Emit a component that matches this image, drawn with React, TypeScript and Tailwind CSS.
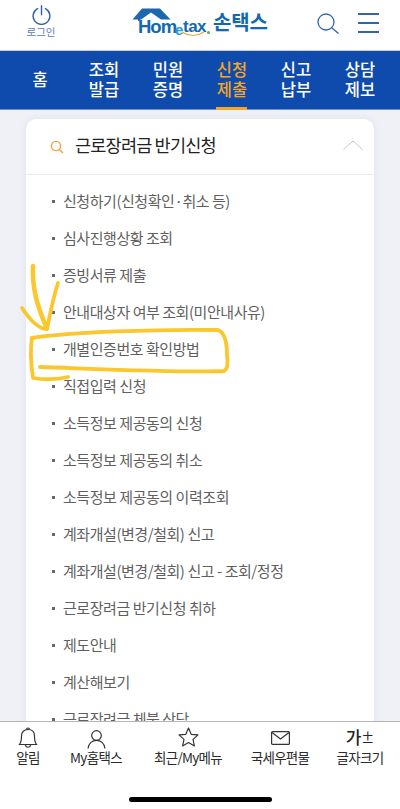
import React from "react";

const font = { fontFamily: '"Noto Sans CJK KR", sans-serif' };
const latin = { fontFamily: '"Liberation Sans", sans-serif' };

const navItems = [
  { a: "홈", b: "" },
  { a: "조회", b: "발급" },
  { a: "민원", b: "증명" },
  { a: "신청", b: "제출", active: true },
  { a: "신고", b: "납부" },
  { a: "상담", b: "제보" },
];

const items = [
  "신청하기(신청확인·취소 등)",
  "심사진행상황 조회",
  "증빙서류 제출",
  "안내대상자 여부 조회(미안내사유)",
  "개별인증번호 확인방법",
  "직접입력 신청",
  "소득정보 제공동의 신청",
  "소득정보 제공동의 취소",
  "소득정보 제공동의 이력조회",
  "계좌개설(변경/철회) 신고",
  "계좌개설(변경/철회) 신고 - 조회/정정",
  "근로장려금 반기신청 취하",
  "제도안내",
  "계산해보기",
  "근로장려금 체불 상담",
];

function Tab({ label, icon, w }: { label: string; icon: React.ReactNode; w: string }) {
  return (
    <div className={`flex flex-col items-center ${w}`}>
      <div className="h-[27px] flex items-end justify-center">{icon}</div>
      <div className="text-[13.5px] leading-[18px] -mt-[1px] tracking-[-0.7px] text-[#2b2b2b] whitespace-nowrap">{label}</div>
    </div>
  );
}

export default function App() {
  return (
    <div className="relative w-[400px] h-[809px] overflow-hidden flex flex-col bg-[#eff1f7]" style={font}>
      {/* Header */}
      <header className="h-[51px] shrink-0 bg-white border-b border-[#c9ccd2] flex pl-[25px] pr-[20px]">
        <div className="w-[32px] flex flex-col items-center pt-[5px]">
          <svg width="19" height="20" viewBox="0 0 19 20" fill="none" stroke="#2f5fb0" strokeWidth="1.4" strokeLinecap="round">
            <path d="M5.5 3.6a8.4 8.4 0 1 0 8 0" />
            <path d="M9.5 0.8v9" />
          </svg>
          <div className="text-[10.5px] leading-[14px] text-[#5a7cb8] whitespace-nowrap">로그인</div>
        </div>
        <div className="ml-[75px] relative w-[138px] h-[40px] shrink-0">
          <svg width="40" height="30" viewBox="0 0 40 30" className="absolute left-[0px] top-[7px]">
            <path d="M0.5 12.5 L10 1.5 H28 L38.5 12.5 H29 L19 5.5 L9 12.5 Z" fill="#1c67ad" />
            <path d="M7 8 V14" stroke="#1c67ad" strokeWidth="2" />
          </svg>
          <span className="absolute left-[6px] top-[17px] text-[#1269b0] font-bold text-[18.5px] leading-[20px] tracking-[-1px]" style={latin}>
            Hom
          </span>
          <span className="absolute left-[43px] top-[22px] text-[#2a9ad6] font-bold text-[15px] leading-[16px]" style={latin}>
            e
          </span>
          <span className="absolute left-[51px] top-[18px] text-[#1269b0] font-bold text-[17px] leading-[18px] tracking-[-0.5px]" style={latin}>
            tax
          </span>
          <span className="absolute left-[75px] top-[31px] w-[3px] h-[3px] rounded-full bg-[#4caf50]" />
          <svg width="34" height="8" viewBox="0 0 34 8" className="absolute left-[49px] top-[31px]" fill="none">
            <path d="M1 1 Q 12 8 23 1" stroke="#f0a33a" strokeWidth="1.2" />
          </svg>
          <span className="absolute left-[81px] top-[9px] text-[#1269b0] font-bold text-[20px] leading-[25px] tracking-[-0.2px] whitespace-nowrap">손택스</span>
        </div>
        <div className="ml-auto flex items-start pt-[13px] gap-[19px] mr-[1px]">
          <svg width="22" height="21" viewBox="0 0 22 21" fill="none" stroke="#2f65b5" strokeWidth="1.3">
            <circle cx="9" cy="9" r="8" />
            <path d="M15 15 L21.5 20.5" />
          </svg>
          <div className="flex flex-col gap-[7.5px] w-[21px]">
            <div className="h-[1.5px] bg-[#2f65b5]" />
            <div className="h-[1.5px] bg-[#2f65b5]" />
            <div className="h-[1.5px] bg-[#2f65b5]" />
          </div>
        </div>
      </header>

      {/* Nav */}
      <nav className="h-[59px] shrink-0 bg-[#0f4bac] border-b border-[#6d92cf] grid grid-cols-6 px-[8px]">
        {navItems.map((n) => (
          <div
            key={n.a}
            className={`relative flex items-center justify-center text-center pb-[3px] font-medium ${n.active ? "text-[#f5a623]" : "text-white"} text-[16.5px] leading-[20px]`}
          >
            <span>
              {n.a}
              {n.b && <br />}
              {n.b}
            </span>
            {n.active && <span className="absolute bottom-[-1px] left-[16px] w-[31px] h-[3px] bg-[#f5a623]" />}
          </div>
        ))}
      </nav>

      {/* Content */}
      <main className="flex-1 min-h-0 overflow-hidden px-[26px] pt-[9px]">
        <div className="bg-white rounded-t-[10px] shadow-[0_0_8px_rgba(120,130,160,0.12)] h-[700px]">
          <div className="h-[56px] border-b border-[#e8e9ec] flex items-center pl-[24px] pr-[11px]">
            <svg width="14" height="14" viewBox="0 0 14 14" fill="none" stroke="#f2a23c" strokeWidth="1.4">
              <circle cx="6" cy="6" r="4.6" />
              <path d="M9.4 9.4 L13 13" />
            </svg>
            <div className="ml-[11px] text-[17.5px] leading-[24px] -mt-[4px] tracking-[-0.8px] text-[#222]">근로장려금 반기신청</div>
            <svg className="ml-auto -mt-[3px]" width="20" height="10" viewBox="0 0 20 10" fill="none" stroke="#c4c6ca" strokeWidth="1">
              <path d="M0.5 9.5 L10 1 L19.5 9.5" />
            </svg>
          </div>
          <ul className="pt-[8px] pl-[26px]">
            {items.map((t) => (
              <li key={t} className="h-[37px] flex items-center text-[15px] tracking-[-0.45px] text-[#5f5f5f] whitespace-nowrap">
                <span className="w-[3px] h-[3px] bg-[#666] mr-[8px] shrink-0" />
                {t}
              </li>
            ))}
          </ul>
        </div>
      </main>

      {/* Highlighter annotation */}
      <svg className="absolute left-0 top-0 pointer-events-none" width="400" height="809" fill="none" stroke="#fcc62d" strokeWidth="3.8" strokeLinecap="round" strokeLinejoin="round">
        <path d="M33 266 C32 285 36 305 47 328" strokeWidth="4.5" />
        <path d="M58 283 C53 298 50 315 47 329 C38 329 30 320 22 308" strokeWidth="3.8" />
        <path d="M32 338 C70 332 160 329 218 330 C226 333 227 345 227 355 C228 362 228 369 224 371 C190 373 100 369 40 367" />
        <path d="M32 338 C30 350 31 365 33 378 C45 380 55 380 68 377" />
      </svg>

      {/* Bottom tabs */}
      <footer className="h-[88px] shrink-0 bg-white border-t border-[#b5b5b8] relative z-10 flex flex-col">
        <div className="flex">
          <Tab
            w="w-[56px]"
            label="알림"
            icon={
              <svg width="20" height="22" viewBox="0 0 20 22" fill="none" stroke="#333" strokeWidth="1.2">
                <path d="M1.5 17.5 C3.5 15 3.5 12 3.5 9 C3.5 5 6 2.5 10 2.5 C14 2.5 16.5 5 16.5 9 C16.5 12 16.5 15 18.5 17.5 Z" />
                <path d="M8.5 2.5 C8.5 0.5 11.5 0.5 11.5 2.5" />
                <path d="M7.5 18 C8 21 12 21 12.5 18" />
              </svg>
            }
          />
          <Tab
            w="w-[80px]"
            label="My홈택스"
            icon={
              <svg width="19" height="19" viewBox="0 0 19 19" fill="none" stroke="#333" strokeWidth="1.2">
                <circle cx="9.5" cy="5.5" r="4.8" />
                <path d="M1 18.5 C1.5 13 5.5 10.3 9.5 10.3 C13.5 10.3 17.5 13 18 18.5" />
              </svg>
            }
          />
          <Tab
            w="w-[104px]"
            label="최근/My메뉴"
            icon={
              <svg width="21" height="20" viewBox="0 0 21 20" fill="none" stroke="#333" strokeWidth="1.2" strokeLinejoin="round" className="mb-[2px]">
                <path d="M10.5 1 L13.2 7.3 L20 7.9 L15 12.4 L16.4 19 L10.5 15.6 L4.6 19 L6 12.4 L1 7.9 L7.8 7.3 Z" />
              </svg>
            }
          />
          <Tab
            w="w-[80px]"
            label="국세우편물"
            icon={
              <svg width="19" height="14" viewBox="0 0 19 14" fill="none" stroke="#333" strokeWidth="1.2" className="mb-[4px]">
                <rect x="0.6" y="0.6" width="17.8" height="12.8" rx="1" />
                <path d="M1 1.5 L9.5 8 L18 1.5" />
              </svg>
            }
          />
          <Tab
            w="w-[80px]"
            label="글자크기"
            icon={
              <span className="mb-[2px] text-[17px] leading-[20px] font-medium text-[#222]">
                가<span className="text-[13px] align-top">±</span>
              </span>
            }
          />
        </div>
        <div className="mt-auto mb-[7px] mx-auto w-[143px] h-[5px] rounded-full bg-black" />
      </footer>
    </div>
  );
}
